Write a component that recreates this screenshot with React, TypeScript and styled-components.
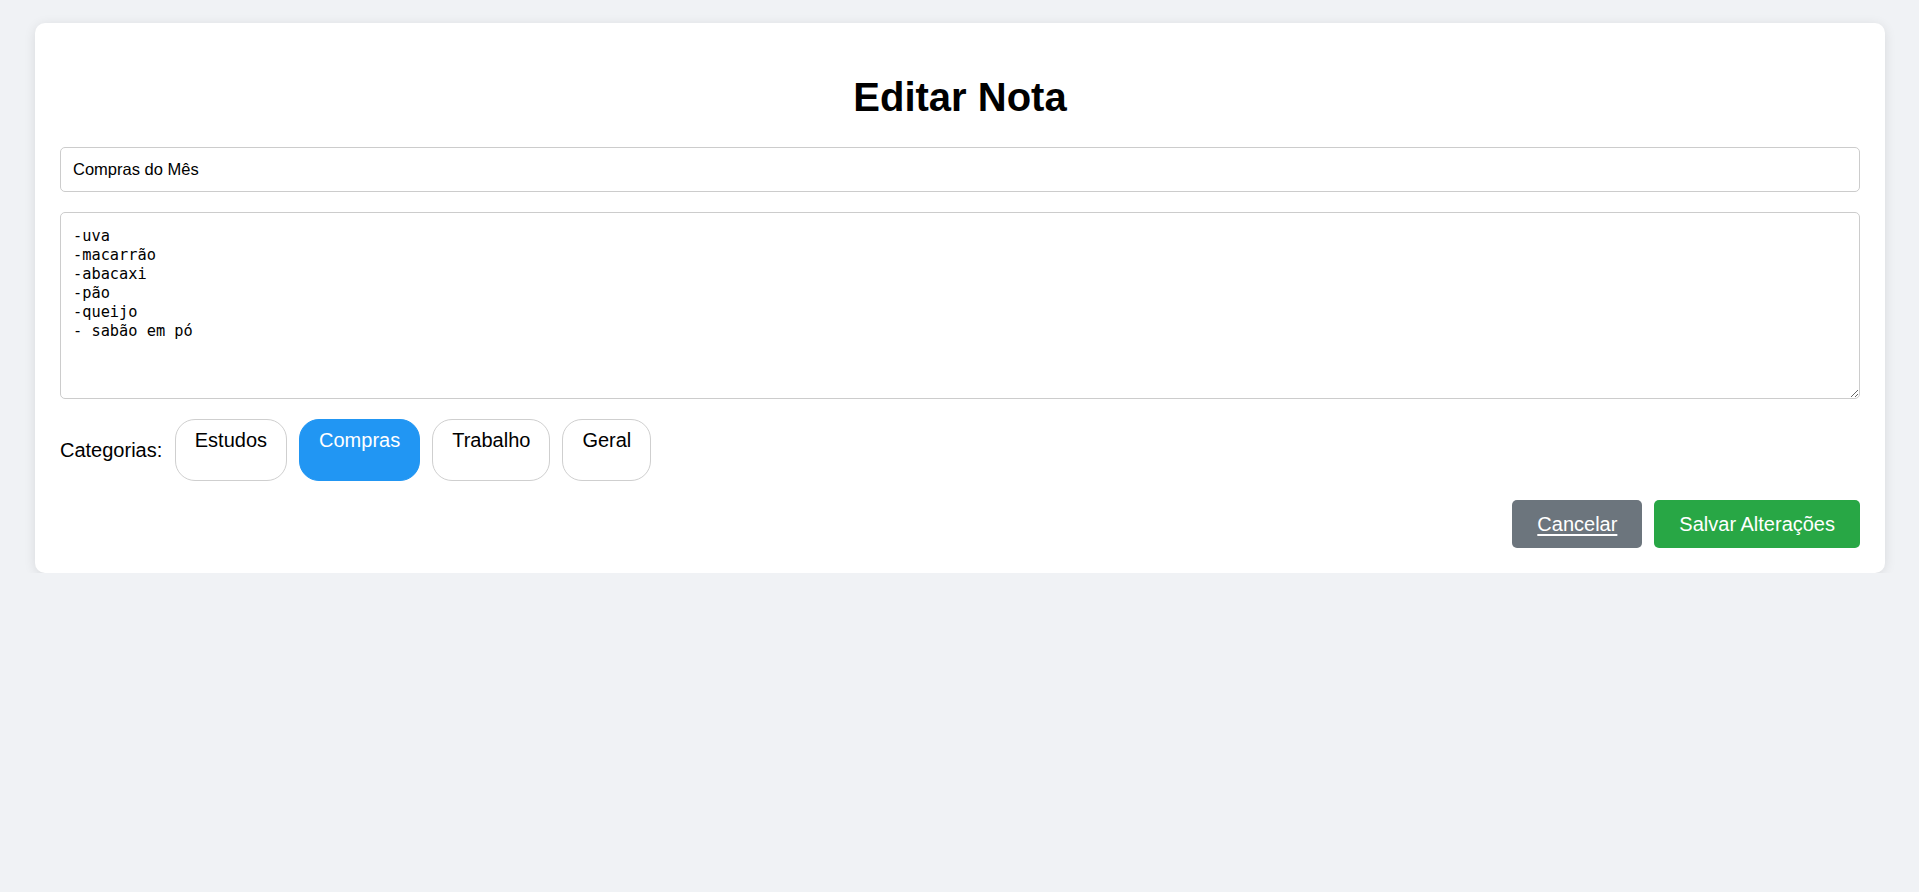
import React, { useState } from "react";
import styled, { createGlobalStyle } from "styled-components";

const GlobalStyle = createGlobalStyle`
  * { box-sizing: border-box; }
  html, body {
    margin: 0;
    padding: 0;
    background: #f0f2f5;
    font-family: "Liberation Sans", Arial, sans-serif;
    color: #000;
  }
`;

const Page = styled.div`
  padding: 23px 34px 0 35px;
`;

const Card = styled.div`
  background: #ffffff;
  border-radius: 10px;
  padding: 25px;
  box-shadow: 0 2px 12px rgba(0, 0, 0, 0.1);
`;

const Title = styled.h1`
  margin: 26px 0 27px;
  font-size: 40px;
  line-height: 46px;
  font-weight: 700;
  text-align: center;
`;

const TitleInput = styled.input`
  display: block;
  width: 100%;
  height: 45px;
  padding: 0 12px;
  margin: 0 0 20px;
  border: 1px solid #cccccc;
  border-radius: 5px;
  font-family: "Liberation Sans", Arial, sans-serif;
  font-size: 16.5px;
  color: #000;
  outline: none;
`;

const Content = styled.textarea`
  display: block;
  width: 100%;
  height: 187px;
  padding: 14px 12px 12px;
  margin: 0 0 20px;
  border: 1px solid #cccccc;
  border-radius: 5px;
  font-family: "DejaVu Sans Mono", "Liberation Mono", monospace;
  font-size: 15.3px;
  line-height: 19px;
  color: #000;
  resize: vertical;
  outline: none;
`;

const CategoryRow = styled.div`
  display: flex;
  align-items: center;
  margin-bottom: 19px;
`;

const CategoryLabel = styled.span`
  font-size: 20px;
  margin-right: 12.5px;
`;

const Pills = styled.div`
  display: flex;
  gap: 12px;
`;

const Pill = styled.div<{ $active?: boolean }>`
  height: 62px;
  padding: 9px 19px 0;
  border: 1px solid ${(p) => (p.$active ? "#2196f3" : "#cfcfcf")};
  border-radius: 20px;
  background: ${(p) => (p.$active ? "#2196f3" : "#ffffff")};
  color: ${(p) => (p.$active ? "#ffffff" : "#000000")};
  font-size: 20px;
  line-height: 23px;
  cursor: pointer;
`;

const Actions = styled.div`
  display: flex;
  justify-content: flex-end;
  gap: 12px;
`;

const ActionButton = styled.button<{ $variant: "cancel" | "save" }>`
  display: inline-flex;
  align-items: center;
  justify-content: center;
  height: 48px;
  padding: 0 25px;
  border: none;
  border-radius: 5px;
  font-family: "Liberation Sans", Arial, sans-serif;
  font-size: 20px;
  color: #ffffff;
  background: ${(p) => (p.$variant === "cancel" ? "#6c757d" : "#28a745")};
  text-decoration: ${(p) => (p.$variant === "cancel" ? "underline" : "none")};
  text-underline-offset: 3px;
  cursor: pointer;
`;

const categories = ["Estudos", "Compras", "Trabalho", "Geral"];

export default function App() {
  const [title, setTitle] = useState("Compras do Mês");
  const [content, setContent] = useState(
    "-uva\n-macarrão\n-abacaxi\n-pão\n-queijo\n- sabão em pó"
  );
  const [active, setActive] = useState("Compras");

  return (
    <>
      <GlobalStyle />
      <Page>
        <Card>
          <Title>Editar Nota</Title>
          <TitleInput value={title} onChange={(e) => setTitle(e.target.value)} />
          <Content value={content} onChange={(e) => setContent(e.target.value)} />
          <CategoryRow>
            <CategoryLabel>Categorias:</CategoryLabel>
            <Pills>
              {categories.map((c) => (
                <Pill key={c} $active={c === active} onClick={() => setActive(c)}>
                  {c}
                </Pill>
              ))}
            </Pills>
          </CategoryRow>
          <Actions>
            <ActionButton as="a" $variant="cancel">
              Cancelar
            </ActionButton>
            <ActionButton $variant="save">Salvar Alterações</ActionButton>
          </Actions>
        </Card>
      </Page>
    </>
  );
}
